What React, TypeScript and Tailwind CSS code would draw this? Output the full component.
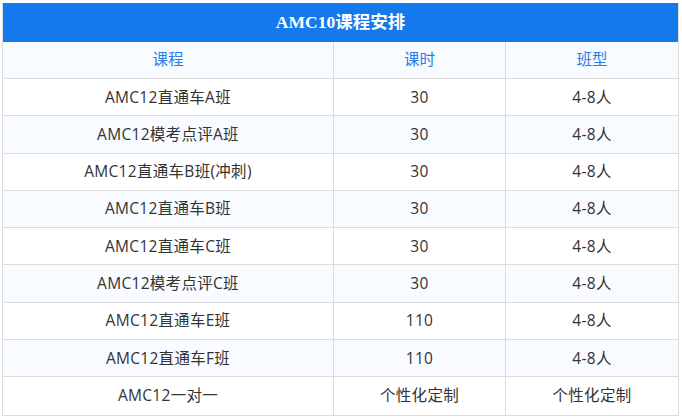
import React from "react";

const rows = [
  ["AMC12直通车A班", "30", "4-8人"],
  ["AMC12模考点评A班", "30", "4-8人"],
  ["AMC12直通车B班(冲刺)", "30", "4-8人"],
  ["AMC12直通车B班", "30", "4-8人"],
  ["AMC12直通车C班", "30", "4-8人"],
  ["AMC12模考点评C班", "30", "4-8人"],
  ["AMC12直通车E班", "110", "4-8人"],
  ["AMC12直通车F班", "110", "4-8人"],
  ["AMC12一对一", "个性化定制", "个性化定制"],
];

const font = { fontFamily: '"Open Sans", "Noto Sans CJK SC", sans-serif' };

export default function App() {
  return (
    <div className="w-[682px] h-[419px] bg-white pt-[3px] pl-[2px]" style={font}>
      <div className="w-[677px] border-x border-b border-[#dcdcdc]">
        <div
          className="h-[39px] bg-[#1479ec] text-white font-bold text-[17.5px] flex items-center justify-center"
          style={{ fontFamily: '"Liberation Serif", "Noto Sans CJK SC", serif' }}
        >
          AMC10课程安排
        </div>
        <div className="grid grid-cols-[331px_172px_1fr] h-[37px] bg-[#f8fbff] text-[#2d7be6] text-[15.5px] border-b border-[#dcdcdc]">
          <div className="flex items-center justify-center border-r border-[#dcdcdc]">课程</div>
          <div className="flex items-center justify-center border-r border-[#dcdcdc]">课时</div>
          <div className="flex items-center justify-center">班型</div>
        </div>
        {rows.map((r, i) => (
          <div
            key={i}
            className={`grid grid-cols-[331px_172px_1fr] h-[37.3px] text-[15.5px] text-[#333] ${
              i % 2 === 1 ? "bg-[#f8fbff]" : "bg-white"
            } ${i < rows.length - 1 ? "border-b border-[#dcdcdc]" : ""}`}
          >
            <div className="flex items-center justify-center border-r border-[#dcdcdc] tracking-[0.3px]">{r[0]}</div>
            <div className="flex items-center justify-center border-r border-[#dcdcdc] tracking-[0.3px]">{r[1]}</div>
            <div className="flex items-center justify-center tracking-[0.3px]">{r[2]}</div>
          </div>
        ))}
      </div>
    </div>
  );
}
